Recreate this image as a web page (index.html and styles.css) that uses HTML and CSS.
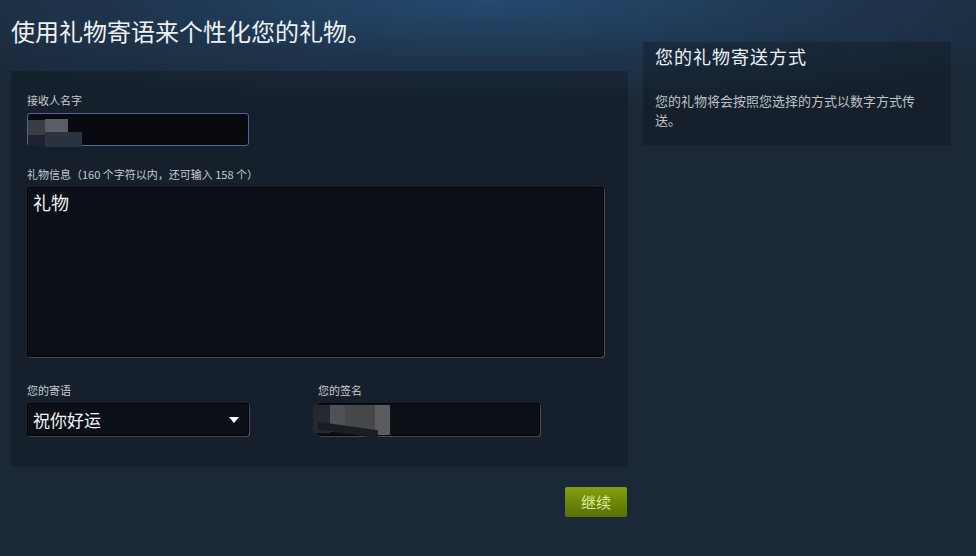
FILE: index.html
```html
<!DOCTYPE html>
<html lang="zh-CN">
<head>
<meta charset="utf-8">
<title>礼物寄语</title>
<link rel="stylesheet" href="styles.css">
</head>
<body>
<div class="page">
  <div class="main">
    <h1 class="title">使用礼物寄语来个性化您的礼物。</h1>
    <div class="panel">
      <div class="label">接收人名字</div>
      <div class="field-wrap">
        <input class="input input-focus" type="text" value="">
        <div class="mosaic">
          <span class="m m1"></span><span class="m m2"></span><span class="m m3"></span><span class="m m4"></span>
        </div>
      </div>
      <div class="label label-gap">礼物信息（160 个字符以内，还可输入 158 个）</div>
      <textarea class="textarea">礼物</textarea>
      <div class="row">
        <div class="col">
          <div class="label">您的寄语</div>
          <div class="select">
            <span>祝你好运</span>
            <svg class="arrow" width="10" height="6" viewBox="0 0 10 6"><path d="M0 0H10L5 6Z" fill="#ffffff"/></svg>
          </div>
        </div>
        <div class="col">
          <div class="label">您的签名</div>
          <div class="field-wrap">
            <input class="input" type="text" value="">
            <div class="mosaic mosaic-sig">
              <span class="s s1"></span><span class="s s2"></span><span class="s s3"></span><span class="s s4"></span><span class="s s5"></span>
            </div>
          </div>
        </div>
      </div>
    </div>
    <div class="actions">
      <button class="btn" type="button">继续</button>
    </div>
  </div>
  <div class="side">
    <div class="side-panel">
      <h2 class="side-title">您的礼物寄送方式</h2>
      <p class="side-desc">您的礼物将会按照您选择的方式以数字方式传送。</p>
    </div>
  </div>
</div>
</body>
</html>
```
FILE: styles.css
```css
html, body {
  margin: 0;
  padding: 0;
}
body {
  width: 976px;
  height: 556px;
  overflow: hidden;
  background: #1b2838;
  background-image: radial-gradient(ellipse 700px 110px at 50% 0, #244a70 0%, rgba(36, 74, 112, 0.35) 55%, rgba(27, 40, 56, 0) 100%);
  background-repeat: no-repeat;
  font-family: "Noto Sans CJK SC", "Noto Sans", sans-serif;
  color: #c7cdd3;
}
.page {
  display: flex;
  gap: 15px;
  padding: 0 25px 0 11px;
}
.main {
  width: 617px;
  display: flex;
  flex-direction: column;
}
.title {
  margin: 15px 0 24px 0;
  font-size: 24px;
  line-height: 32px;
  font-weight: normal;
  color: #eef1f3;
}
.panel {
  background: rgba(0, 0, 0, 0.2);
  padding: 21px 24px 31px 16px;
  display: flex;
  flex-direction: column;
}
.label {
  font-size: 11px;
  line-height: 16px;
  color: #c5cbd1;
  margin-bottom: 5px;
}
.label-gap {
  margin-top: 20px;
}
.field-wrap {
  position: relative;
  width: 222px;
  height: 33px;
}
.input {
  box-sizing: border-box;
  width: 222px;
  height: 33px;
  margin: 0;
  padding: 0 5px;
  border: 1px solid #000;
  border-radius: 3px;
  box-shadow: 1px 1px 0 rgba(255, 255, 255, 0.2);
  background: #0b0f16;
  color: #fff;
  outline: none;
  font-family: inherit;
  font-size: 17px;
}
.input-focus {
  border: 1px solid #5263a0;
  box-shadow: none;
  background: #080a10;
}
.mosaic {
  position: absolute;
  left: 1px;
  top: 4px;
  width: 60px;
  height: 32px;
}
.m {
  position: absolute;
  display: block;
}
.m1 { left: 0; top: 3px; width: 17px; height: 15px; background: #3a3d44; }
.m2 { left: 17px; top: 2px; width: 23px; height: 13px; background: #5a5d63; }
.m3 { left: 17px; top: 15px; width: 37px; height: 15px; background: #2b3340; }
.m4 { left: 0; top: 18px; width: 17px; height: 11px; background: #1c2230; }
.mosaic-sig {
  left: -5px;
  top: 1px;
  width: 80px;
  height: 31px;
}
.s {
  position: absolute;
  display: block;
  top: 1px;
}
.s1 { left: 0; width: 17px; height: 28px; background: #25282e; }
.s2 { left: 17px; width: 15px; height: 27px; background: #4f5156; }
.s3 { left: 32px; width: 30px; height: 28px; background: #45474b; }
.s4 { left: 62px; width: 15px; height: 30px; background: #5a5c5f; }
.s5 { left: 5px; top: 22px; width: 60px; height: 8px; background: #1a1d24; transform: skewY(8deg); }
.textarea {
  box-sizing: border-box;
  display: block;
  width: 577px;
  height: 170px;
  margin: 0;
  padding: 3px 5px;
  border: 1px solid #000;
  border-radius: 3px;
  box-shadow: 1px 1px 0 rgba(255, 255, 255, 0.2);
  background: #0b1018;
  color: #f2f4f6;
  font-family: inherit;
  font-size: 18px;
  line-height: 22px;
  resize: none;
  outline: none;
}
.row {
  display: grid;
  grid-template-columns: 291px 291px;
  margin-top: 25px;
}
.col {
  display: flex;
  flex-direction: column;
}
.select {
  box-sizing: border-box;
  width: 222px;
  height: 33px;
  display: flex;
  align-items: center;
  justify-content: space-between;
  padding: 0 9px 0 5px;
  border: 1px solid #000;
  border-radius: 3px;
  box-shadow: 1px 1px 0 rgba(255, 255, 255, 0.2);
  background: #0b0f16;
  color: #f2f4f6;
  font-size: 17px;
}
.arrow {
  display: block;
}
.actions {
  display: flex;
  justify-content: flex-end;
  margin-top: 20px;
  padding-right: 1px;
}
.btn {
  width: 62px;
  height: 30px;
  margin: 0;
  padding: 0;
  border: none;
  border-radius: 2px;
  background: linear-gradient(to bottom, #819e0c 5%, #5a7205 95%);
  color: #d7ee9d;
  font-family: inherit;
  font-size: 15px;
  line-height: 30px;
  cursor: pointer;
}
.side {
  width: 308px;
  padding-top: 42px;
}
.side-panel {
  background: rgba(0, 0, 0, 0.2);
  padding: 2px 28px 16px 12px;
}
.side-title {
  margin: 0;
  font-size: 18px;
  letter-spacing: 1px;
  line-height: 25px;
  font-weight: normal;
  color: #eef1f3;
}
.side-desc {
  margin: 22px 0 0 0;
  font-size: 13px;
  line-height: 19px;
  color: #bfc4c9;
}
```
